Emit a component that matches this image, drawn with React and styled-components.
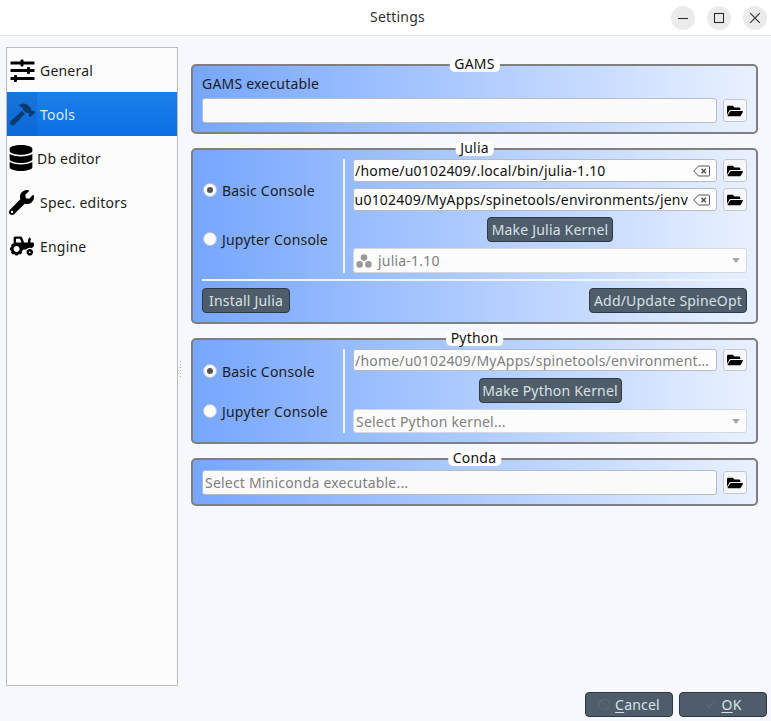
import React from "react";
import styled, { createGlobalStyle } from "styled-components";
import { FaHammer, FaDatabase, FaWrench, FaTractor, FaFolderOpen } from "react-icons/fa";
import { Ban, Check } from "lucide-react";

const Global = createGlobalStyle`
  html, body { margin: 0; padding: 0; background: #f7f8fe; }
  * { box-sizing: border-box; }
  body { font-family: "Noto Sans", "DejaVu Sans", sans-serif; font-size: 14px; letter-spacing: 0.2px; color: #1c1c1c; }
`;

const Window = styled.div`
  width: 771px;
  height: 721px;
  display: flex;
  flex-direction: column;
  background: #f7f8fe;
  overflow: hidden;
`;
const TitleBar = styled.header`
  height: 36px;
  flex: none;
  display: flex;
  align-items: center;
  background: #fff;
  border-bottom: 1px solid #e6e6ea;
  padding-right: 4px;
`;
const Title = styled.div`
  flex: 1;
  padding: 0 0 2px 124px;
  text-align: center;
  color: #303030;
  font-size: 14px;
`;
const WinControls = styled.div`
  display: flex;
  gap: 12px;
`;
const WinButton = styled.div`
  width: 24px;
  height: 24px;
  border-radius: 50%;
  background: #ebebeb;
  display: flex;
  align-items: center;
  justify-content: center;
`;
const Middle = styled.div`
  flex: 1;
  display: flex;
  padding: 11px 0 0 6px;
  min-height: 0;
`;
const Sidebar = styled.nav`
  width: 172px;
  height: 639px;
  flex: none;
  background: #fcfcfc;
  border: 1px solid #bcbcbc;
`;
const SideItem = styled.div`
  height: 44px;
  display: flex;
  align-items: center;
  gap: ${(p) => p.$gap}px;
  font-size: 14px;
  color: ${(p) => (p.$active ? "#dcebff" : "#1c1c1c")};
  background: ${(p) => (p.$active ? "linear-gradient(#1c7fe8, #0c70e6)" : "transparent")};
`;
const SideIcon = styled.div`
  width: 30px;
  align-self: stretch;
  flex: none;
  display: flex;
  align-items: center;
  padding-left: ${(p) => p.$pl ?? 3}px;
  color: ${(p) => (p.$active ? "#0d3a70" : "#000")};
  background: ${(p) => (p.$active ? "rgba(10, 80, 170, 0.22)" : "transparent")};
`;
const Handle = styled.div`
  width: 13px;
  flex: none;
  padding: 313px 0 0 1px;
`;
const HandleDots = styled.div`
  width: 3px;
  height: 18px;
  background-image: radial-gradient(#a8a8b0 0.7px, transparent 0.9px);
  background-size: 3px 3px;
`;
const Main = styled.main`
  width: 567px;
  flex: none;
  display: flex;
  flex-direction: column;
  gap: 14px;
  padding-top: 17px;
`;
const Group = styled.section`
  position: relative;
  border: 2px solid #808080;
  border-radius: 5px;
  padding: ${(p) => p.$top || 9}px 9px 9px;
  background: linear-gradient(90deg, #76a6fe 0%, #e9f1ff 100%);
`;
const GroupTitle = styled.div`
  position: absolute;
  top: -9px;
  left: 50%;
  transform: translateX(-50%);
  height: 15px;
  line-height: 14px;
  padding: 0 5px;
  background: #fff;
  border-radius: 5px;
  color: #111;
  font-size: 14px;
  white-space: nowrap;
`;
const FieldLabel = styled.div`
  height: 23px;
  line-height: 18px;
  color: #1c1c1c;
`;
const FileRow = styled.div`
  display: flex;
  align-items: center;
  gap: 6px;
`;
const Field = styled.div`
  flex: 1;
  min-width: 0;
  height: ${(p) => p.$h || 25}px;
  display: flex;
  align-items: center;
  padding: 0 ${(p) => p.$pr ?? 2}px 0 ${(p) => p.$pl ?? 2}px;
  background: ${(p) => (p.$plain ? "#fafafa" : "#fdfdfd")};
  border: 1px solid #b7bcc4;
  border-radius: 3px;
  color: ${(p) => (p.$muted ? "#7f7f7f" : "#111")};
`;
const FieldText = styled.span`
  flex: 1;
  min-width: 0;
  white-space: nowrap;
  overflow: hidden;
  text-overflow: ${(p) => (p.$ellipsis ? "ellipsis" : "clip")};
  display: ${(p) => (p.$end ? "flex" : "block")};
  justify-content: flex-end;
`;
const ClearIcon = styled.svg`
  flex: none;
  width: 17px;
  height: 12px;
  margin: 0 6px 0 5px;
`;
const FolderButton = styled.button`
  width: 24px;
  height: ${(p) => p.$h || 23}px;
  flex: none;
  padding: 0;
  display: flex;
  align-items: center;
  justify-content: center;
  background: #f6f7fb;
  border: 1px solid #c4c7cf;
  border-radius: 3px;
  color: #000;
`;
const Split = styled.div`
  display: flex;
  gap: 8px;
`;
const RadioColumn = styled.div`
  width: 141px;
  flex: none;
  display: flex;
  flex-direction: column;
  gap: ${(p) => p.$gap}px;
  padding-top: ${(p) => p.$top}px;
`;
const VDivider = styled.div`
  width: 2px;
  flex: none;
  margin-left: -8px;
  background: #eef3ff;
`;
const RadioRow = styled.label`
  height: 18px;
  display: flex;
  align-items: center;
  gap: 5px;
  color: #1c1c1c;
  white-space: nowrap;
`;
const RadioMark = styled.span`
  width: 14px;
  height: 14px;
  margin-left: 1px;
  flex: none;
  border-radius: 50%;
  background: #fcfcfc;
  border: 1px solid #c2c6cc;
  display: flex;
  align-items: center;
  justify-content: center;
  &::after {
    content: "";
    width: 6px;
    height: 6px;
    border-radius: 50%;
    background: ${(p) => (p.$on ? "#555" : "transparent")};
  }
`;
const Stack = styled.div`
  flex: 1;
  min-width: 0;
  display: flex;
  flex-direction: column;
  gap: ${(p) => p.$gap || 6}px;
`;
const DarkButton = styled.button`
  width: ${(p) => p.$w}px;
  height: 25px;
  padding: 0;
  font: inherit;
  letter-spacing: inherit;
  color: #d8e0e4;
  background: #4f5d6b;
  border: 1px solid #2c3a48;
  border-radius: 4px;
  white-space: nowrap;
  align-self: ${(p) => p.$align || "auto"};
`;
const Combo = styled.div`
  height: ${(p) => p.$h || 25}px;
  margin-top: ${(p) => p.$mt || 0}px;
  display: flex;
  align-items: center;
  gap: 6px;
  padding: 0 3px 0 2px;
  background: #fcfcfc;
  border: 1px solid #d4d8e0;
  border-radius: 3px;
  color: #808080;
`;
const ComboText = styled.span`
  flex: 1;
`;
const ComboArrow = styled.span`
  width: 0;
  height: 0;
  margin-right: 3px;
  border-left: 4px solid transparent;
  border-right: 4px solid transparent;
  border-top: 5px solid #a8a8a8;
`;
const HLine = styled.div`
  height: 2px;
  margin: 6px 0 7px;
  background: #eef3ff;
`;
const ActionRow = styled.div`
  display: flex;
  justify-content: space-between;
`;
const Footer = styled.footer`
  flex: none;
  display: flex;
  justify-content: flex-end;
  gap: 6px;
  padding: 0 4px 4px 0;
`;
const FooterButton = styled.button`
  width: 88px;
  height: 25px;
  padding: 0;
  display: flex;
  align-items: center;
  justify-content: center;
  gap: 4px;
  font: inherit;
  letter-spacing: inherit;
  color: #d8e0e4;
  background: #4f5d6b;
  border: 1px solid #2c3a48;
  border-radius: 4px;
  svg { color: #5c6975; }
  u { text-underline-offset: 2px; }
`;

const SlidersIcon = () => (
  <svg width="25" height="24" viewBox="0 0 25 24" fill="#000">
    <rect x="0.5" y="3.5" width="24" height="3" rx="0.5" />
    <rect x="0.5" y="11" width="24" height="3" rx="0.5" />
    <rect x="0.5" y="19" width="24" height="3" rx="0.5" />
    <rect x="10.5" y="1.5" width="3" height="7" rx="1" />
    <rect x="17" y="9" width="3" height="7" rx="1" />
    <rect x="4" y="17" width="3" height="7" rx="1" />
  </svg>
);
const Clear = () => (
  <ClearIcon viewBox="0 0 17 12" fill="none">
    <path d="M5.5 1H15.5a1 1 0 0 1 1 1v8a1 1 0 0 1-1 1H5.5L.8 6z" stroke="#555" strokeWidth="1" fill="#fdfdfd" />
    <path d="M8.5 3.8l4.4 4.4M12.9 3.8l-4.4 4.4" stroke="#555" strokeWidth="1.6" />
  </ClearIcon>
);
const JuliaDots = () => (
  <svg width="16" height="14" viewBox="0 0 16 14" style={{ flex: "none" }}>
    <circle cx="8" cy="3.6" r="3.3" fill="#9a9a9a" />
    <circle cx="3.6" cy="10.4" r="3.3" fill="#9a9a9a" />
    <circle cx="12.4" cy="10.4" r="3.3" fill="#9a9a9a" />
  </svg>
);
const WinGlyph = ({ children }) => (
  <svg width="12" height="12" viewBox="0 0 12 12" fill="none" stroke="#2e2e2e" strokeWidth="1.1">{children}</svg>
);
const Folder = ({ h }) => (
  <FolderButton $h={h}><FaFolderOpen size={16} /></FolderButton>
);
const Radios = ({ gap, top }) => (
  <RadioColumn $gap={gap} $top={top}>
    <RadioRow><RadioMark $on />Basic Console</RadioRow>
    <RadioRow><RadioMark />Jupyter Console</RadioRow>
  </RadioColumn>
);

const nav = [
  { label: "General", icon: <SlidersIcon />, gap: 3 },
  { label: "Tools", icon: <FaHammer size={25} />, gap: 3, active: true },
  { label: "Db editor", icon: <FaDatabase size={26} />, gap: 0, pl: 1 },
  { label: "Spec. editors", icon: <FaWrench size={25} />, gap: 3, pl: 2 },
  { label: "Engine", icon: <FaTractor size={24} />, gap: 3 },
];

export default function App() {
  return (
    <Window>
      <Global />
      <TitleBar>
        <Title>Settings</Title>
        <WinControls>
          <WinButton><WinGlyph><path d="M1 6.5h10" /></WinGlyph></WinButton>
          <WinButton><WinGlyph><rect x="1.5" y="1.5" width="9" height="9" /></WinGlyph></WinButton>
          <WinButton><WinGlyph><path d="M1.2 1.2l9.6 9.6M10.8 1.2l-9.6 9.6" /></WinGlyph></WinButton>
        </WinControls>
      </TitleBar>
      <Middle>
        <Sidebar>
          {nav.map(({ label, icon, gap, pl, active }) => (
            <SideItem key={label} $active={active} $gap={gap}>
              <SideIcon $active={active} $pl={pl}>{icon}</SideIcon>
              {label}
            </SideItem>
          ))}
        </Sidebar>
        <Handle><HandleDots /></Handle>
        <Main>
          <Group>
            <GroupTitle>GAMS</GroupTitle>
            <FieldLabel>GAMS executable</FieldLabel>
            <FileRow>
              <Field $plain />
              <Folder />
            </FileRow>
          </Group>
          <Group>
            <GroupTitle>Julia</GroupTitle>
            <Split>
              <Radios gap={31} top={22} />
              <VDivider />
              <Stack>
                <FileRow>
                  <Field $h={23} $pr={0} $pl={1}><FieldText>/home/u0102409/.local/bin/julia-1.10</FieldText><Clear /></Field>
                  <Folder />
                </FileRow>
                <FileRow>
                  <Field $h={23} $pr={0} $pl={0}><FieldText $end>u0102409/MyApps/spinetools/environments/jenv</FieldText><Clear /></Field>
                  <Folder />
                </FileRow>
                <DarkButton $w={126} $align="center">Make Julia Kernel</DarkButton>
                <Combo><JuliaDots /><ComboText>julia-1.10</ComboText><ComboArrow /></Combo>
              </Stack>
            </Split>
            <HLine />
            <ActionRow>
              <DarkButton $w={88}>Install Julia</DarkButton>
              <DarkButton $w={158}>Add/Update SpineOpt</DarkButton>
            </ActionRow>
          </Group>
          <Group>
            <GroupTitle>Python</GroupTitle>
            <Split>
              <Radios gap={22} top={13} />
              <VDivider />
              <Stack $gap={7}>
                <FileRow>
                  <Field $h={22} $muted $pl={1}><FieldText $ellipsis>/home/u0102409/MyApps/spinetools/environments/python/bin/python3</FieldText></Field>
                  <Folder h={22} />
                </FileRow>
                <DarkButton $w={143} $align="center">Make Python Kernel</DarkButton>
                <Combo $h={24} $mt={-1}><ComboText>Select Python kernel...</ComboText><ComboArrow /></Combo>
              </Stack>
            </Split>
          </Group>
          <Group $top={10}>
            <GroupTitle>Conda</GroupTitle>
            <FileRow>
              <Field $plain $muted><FieldText>Select Miniconda executable...</FieldText></Field>
              <Folder />
            </FileRow>
          </Group>
        </Main>
      </Middle>
      <Footer>
        <FooterButton><Ban size={13} /> <span><u>C</u>ancel</span></FooterButton>
        <FooterButton><Check size={13} /> <span><u>O</u>K</span></FooterButton>
      </Footer>
    </Window>
  );
}
